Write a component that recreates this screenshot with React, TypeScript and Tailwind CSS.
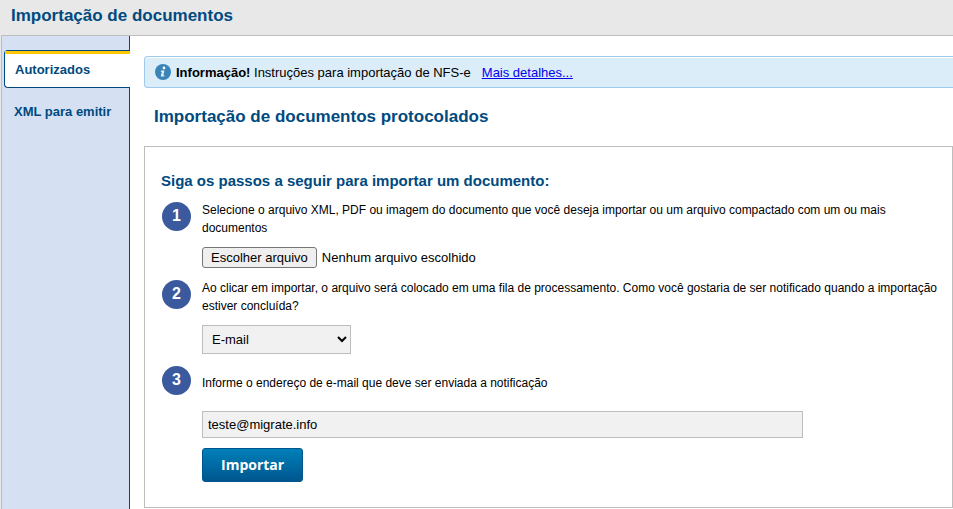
import { useRef, useState } from 'react';
import type { ReactNode } from 'react';

interface Tab {
  id: string;
  label: string;
}

const tabs: Tab[] = [
  { id: 'autorizados', label: 'Autorizados' },
  { id: 'xml', label: 'XML para emitir' },
];

function InfoIcon() {
  return (
    <svg viewBox="0 0 16 16" className="w-4 h-4 shrink-0" aria-hidden="true">
      <circle cx="8" cy="8" r="8" fill="#3a84b8" />
      <circle cx="9" cy="4" r="1.4" fill="#fff" />
      <path
        d="M6 6.6h3.4L8.3 11.2h1.2l-.4 1.3H5.7l1.2-4.7H5.7z"
        fill="#e4f1fa"
      />
    </svg>
  );
}

function Sidebar() {
  const [active, setActive] = useState('autorizados');

  return (
    <nav className="w-32 shrink-0 border-r border-[#004a80] bg-[#d5e1f3] pt-3.5">
      <ul className="flex flex-col gap-[5px] pl-0.5">
        {tabs.map((tab) => (
          <li key={tab.id} className={tab.id === active ? '-mr-px' : ''}>
            <button
              type="button"
              onClick={() => setActive(tab.id)}
              className={
                tab.id === active
                  ? 'block w-full h-[38px] rounded-l-sm border border-r-0 border-[#004a80] bg-white text-left text-[13px] font-bold text-[#004a80]'
                  : 'block w-full h-[38px] pl-2.5 text-left text-[13px] font-bold text-[#004a80]'
              }
            >
              {tab.id === active ? (
                <span className="flex h-full items-center border-t-3 border-[#ffc700] pb-0.5 pl-2.5">
                  {tab.label}
                </span>
              ) : (
                tab.label
              )}
            </button>
          </li>
        ))}
      </ul>
    </nav>
  );
}

function Step({ number, children }: { number: number; children: ReactNode }) {
  return (
    <li className="flex items-start gap-[11px]">
      <span className="mt-px flex w-[29px] h-[29px] shrink-0 items-center justify-center rounded-full bg-[#3b5a9d] pb-px text-base font-bold text-white">
        {number}
      </span>
      <div className="grow">{children}</div>
    </li>
  );
}

function FilePicker() {
  const inputRef = useRef<HTMLInputElement>(null);
  const [fileName, setFileName] = useState('');

  return (
    <div className="flex items-center gap-[5px] text-[13px]">
      <input
        ref={inputRef}
        type="file"
        className="hidden"
        aria-label="Arquivo do documento"
        onChange={(e) => setFileName(e.target.files?.[0]?.name ?? '')}
      />
      <button
        type="button"
        onClick={() => inputRef.current?.click()}
        className="h-[21px] rounded-[3px] border border-[#767676] bg-[#efefef] px-2 leading-4"
      >
        Escolher arquivo
      </button>
      <span>{fileName || 'Nenhum arquivo escolhido'}</span>
    </div>
  );
}

export default function App() {
  const [email, setEmail] = useState('teste@migrate.info');

  return (
    <div className="flex min-h-screen flex-col bg-[#e8e8e8] font-['Liberation_Sans',Arial,sans-serif] text-black">
      <header className="flex h-[35px] items-center px-[11px] pb-1">
        <h1 className="text-[17px] font-bold text-[#004a80]">Importação de documentos</h1>
      </header>

      <div className="ml-px flex grow border-t border-l border-[#bdbdbd] bg-white">
        <Sidebar />

        <main className="grow pt-5 pl-3.5">
          <div className="flex h-8 items-center rounded-l-sm border border-r-0 border-[#9ecaed] bg-[#dbedf9] pl-2.5 text-[13px] inset-shadow-[0_1px_#fff]">
            <InfoIcon />
            <p className="pt-px pl-[5px]">
              <strong>Informação!</strong> Instruções para importação de NFS-e
            </p>
            <a href="#detalhes" className="pt-px pl-[11px] text-[#0000ee] underline">
              Mais detalhes...
            </a>
          </div>

          <h2 className="pt-[17px] pb-[17px] pl-2.5 text-[17px] leading-6 font-bold text-[#004a80]">
            Importação de documentos protocolados
          </h2>

          <section className="border border-[#bdbdbd] pt-6 pr-3 pb-[25px] pl-4 text-xs leading-[18px]">
            <h3 className="text-[15px] leading-5 font-bold text-[#004a80]">
              Siga os passos a seguir para importar um documento:
            </h3>

            <ol className="pt-2.5 pl-px">
              <Step number={1}>
                <p>
                  Selecione o arquivo XML, PDF ou imagem do documento que você deseja importar ou
                  um arquivo compactado com um ou mais documentos
                </p>
                <div className="pt-2.5 pb-[11px]">
                  <FilePicker />
                </div>
              </Step>

              <Step number={2}>
                <label htmlFor="notificacao" className="block">
                  Ao clicar em importar, o arquivo será colocado em uma fila de processamento. Como
                  você gostaria de ser notificado quando a importação estiver concluída?
                </label>
                <div className="pt-2.5 pb-[11px]">
                  <select
                    id="notificacao"
                    className="block h-[29px] w-[149px] border border-[#bdbdbd] bg-[#f1f1f1] pl-[5px] text-[13px]"
                  >
                    <option>E-mail</option>
                    <option>Não notificar</option>
                  </select>
                </div>
              </Step>

              <Step number={3}>
                <label htmlFor="email" className="block pt-[9px]">
                  Informe o endereço de e-mail que deve ser enviada a notificação
                </label>
                <div className="pt-[19px] pb-2.5">
                  <input
                    id="email"
                    type="email"
                    value={email}
                    onChange={(e) => setEmail(e.target.value)}
                    className="block h-[27px] w-full max-w-[601px] border border-[#bdbdbd] bg-[#f1f1f1] px-[5px] text-[13px]"
                  />
                </div>
                <button
                  type="button"
                  className="h-[34px] rounded-[3px] border border-[#00558c] bg-linear-to-b from-[#0080b9] to-[#00568f] px-[18px] font-['Open_Sans',sans-serif] text-sm font-bold text-white"
                >
                  Importar
                </button>
              </Step>
            </ol>
          </section>
        </main>
      </div>
    </div>
  );
}
